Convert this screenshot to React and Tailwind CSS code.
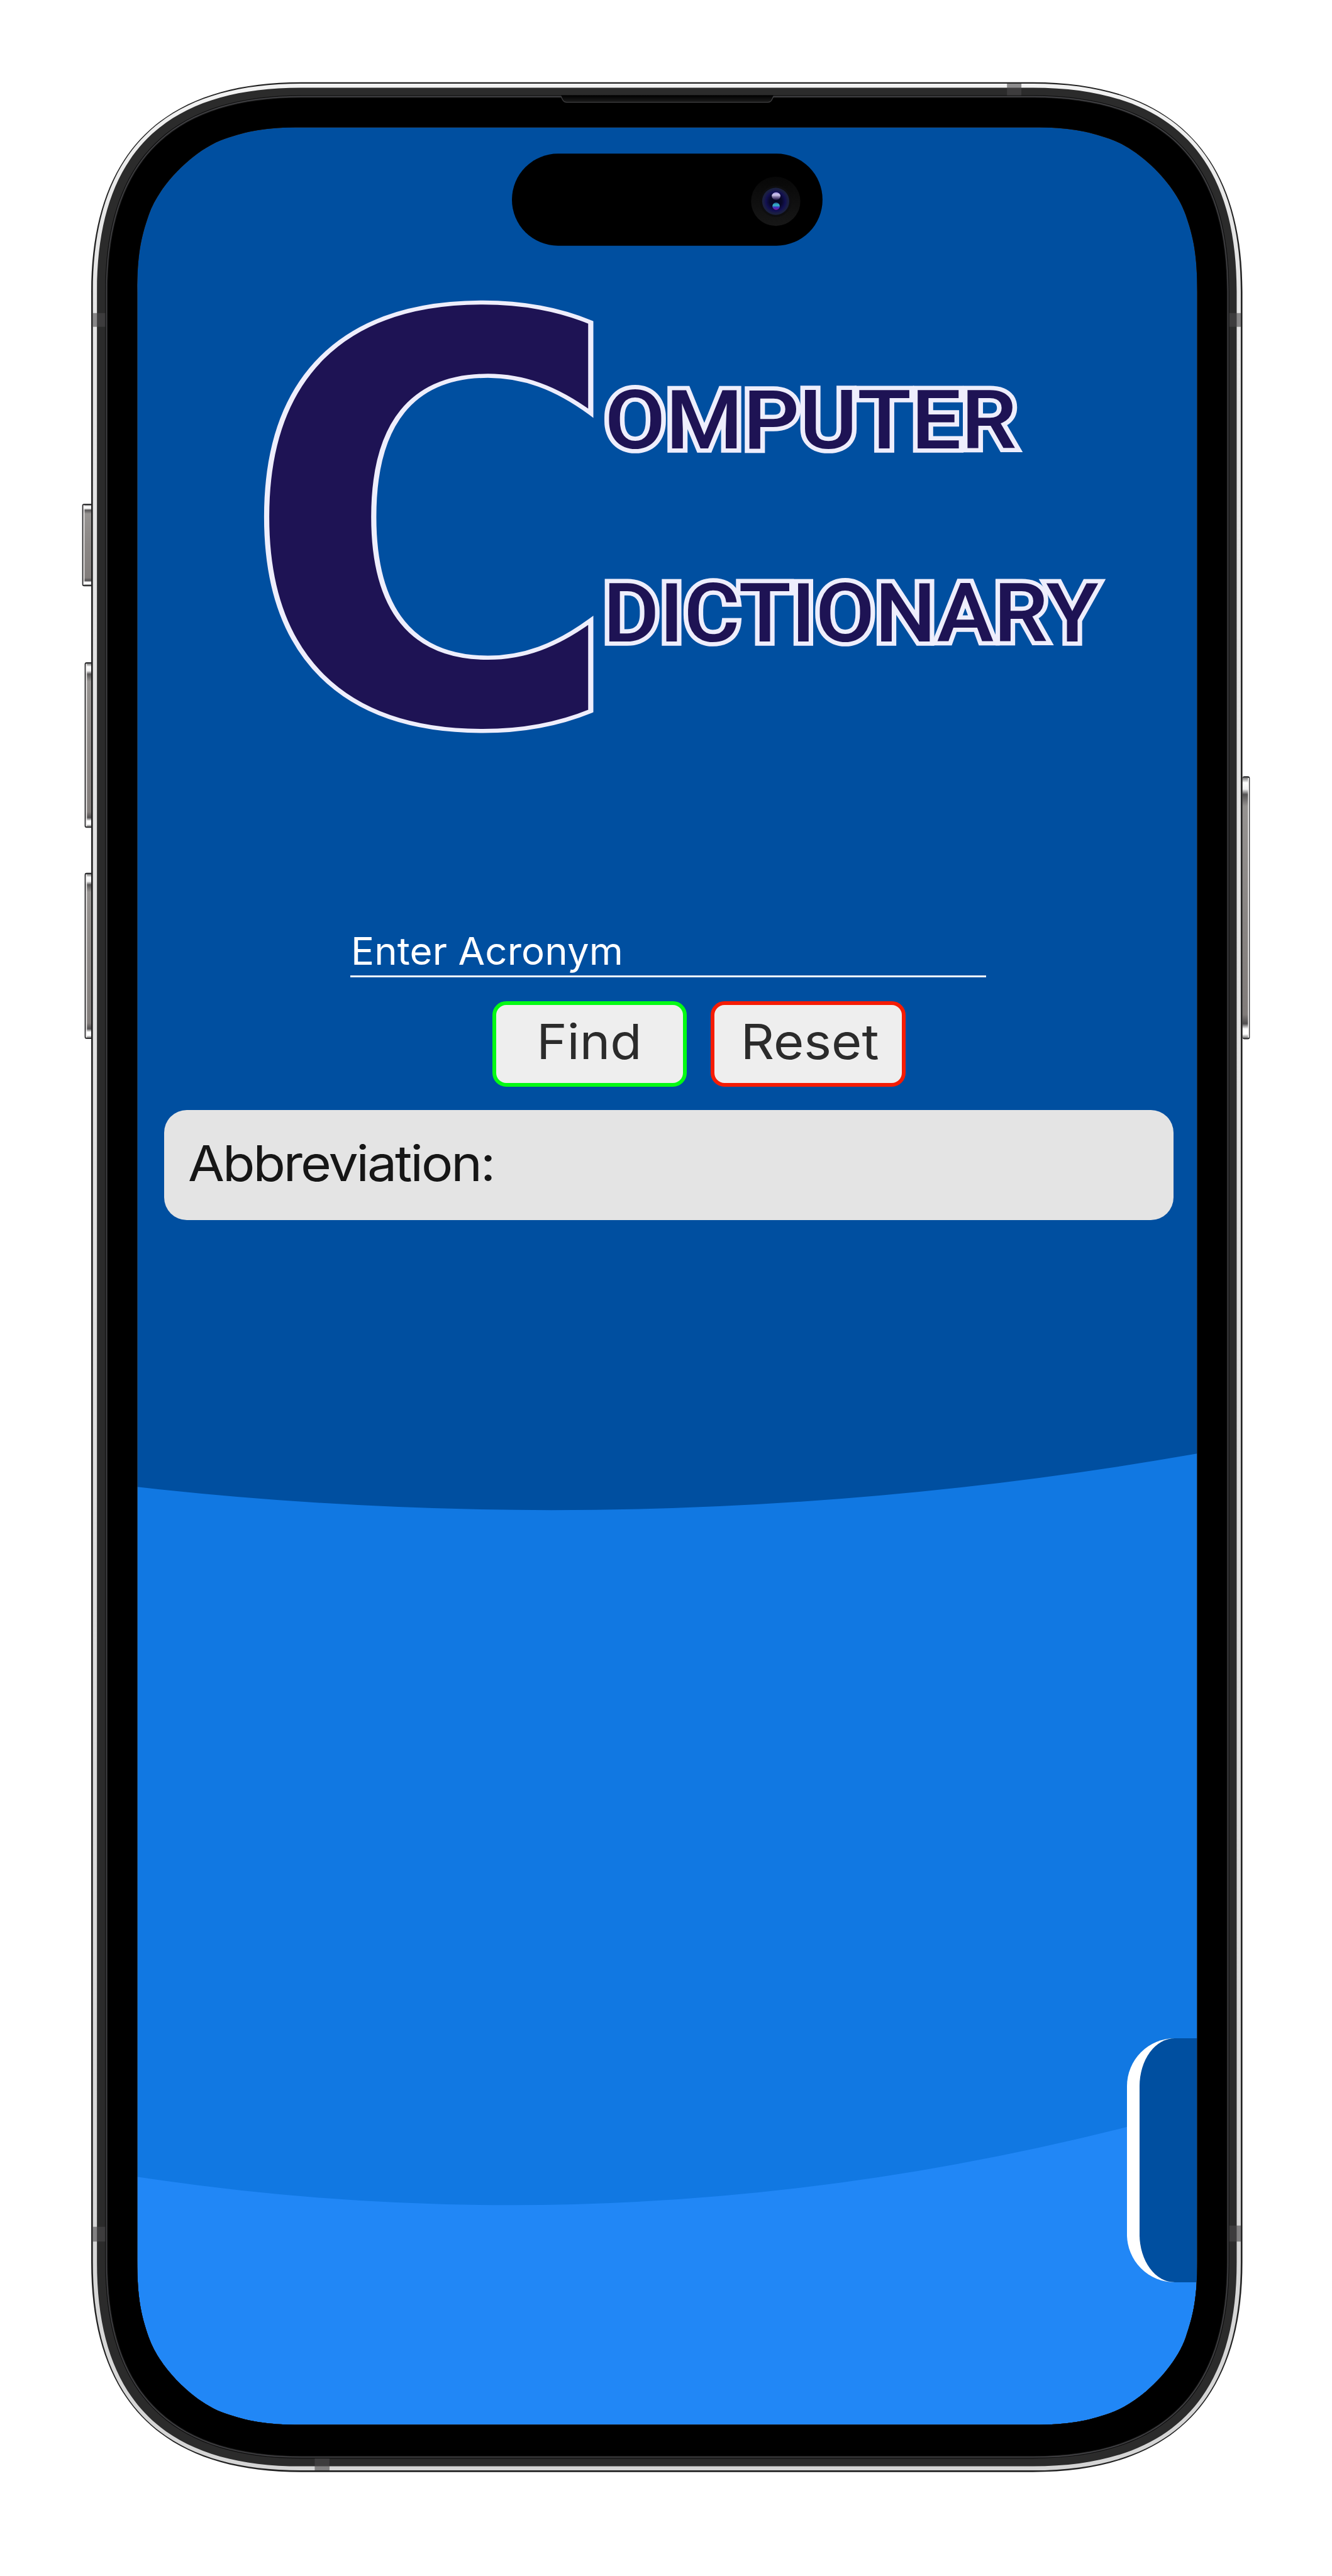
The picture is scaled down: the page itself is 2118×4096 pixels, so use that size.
const SCREEN_PATH = (() => {
  // One corner as [dx, dy] offsets measured from the corner point.
  const x0 = 334, y0 = 310, x1 = 2914, y1 = 5902;
  const pts = [[0, 400], [0, 310], [9, 268], [28, 213], [54, 138], [138, 54], [213, 28], [268, 9], [310, 0], [400, 0]];
  const corner = (fx, fy, reverse) => {
    const p = (reverse ? [...pts].reverse() : pts).map(([a, b]) => `${fx(a)} ${fy(b)}`);
    return `${p[0]} C ${p[1]} ${p[2]} ${p[3]} C ${p[4]} ${p[5]} ${p[6]} C ${p[7]} ${p[8]} ${p[9]}`;
  };
  const l = (a) => x0 + a, r = (a) => x1 - a, t = (b) => y0 + b, d = (b) => y1 - b;
  return `M ${corner(l, t, false)} L ${corner(r, t, true)} L ${corner(r, d, false)} L ${corner(l, d, true)} Z`;
})();

// Continuous-curvature rounded rectangle for the nested frame layers.
function squircle(x0, y0, x1, y1, L, c) {
  return [
    `M ${x0} ${y0 + L}`,
    `C ${x0} ${y0 + c} ${x0 + c} ${y0} ${x0 + L} ${y0}`,
    `L ${x1 - L} ${y0}`,
    `C ${x1 - c} ${y0} ${x1} ${y0 + c} ${x1} ${y0 + L}`,
    `L ${x1} ${y1 - L}`,
    `C ${x1} ${y1 - c} ${x1 - c} ${y1} ${x1 - L} ${y1}`,
    `L ${x0 + L} ${y1}`,
    `C ${x0 + c} ${y1} ${x0} ${y1 - c} ${x0} ${y1 - L}`,
    "Z",
  ].join(" ");
}

const FRAME_LAYERS = [
  { fill: "#222222", d: squircle(222, 200, 3024, 6017, 510, 174) },
  { fill: "url(#rim)", d: squircle(226, 203.5, 3020, 6013, 506, 169) },
  { fill: "#2b2b2b", d: squircle(236, 213.5, 3010, 6003, 496, 163) },
  { fill: "#101010", d: squircle(256, 232, 2992, 5984, 478, 158) },
  { fill: "#47474b", d: squircle(258, 234, 2990, 5982, 476, 157) },
  { fill: "#222222", d: squircle(260, 236, 2988, 5980, 474, 156) },
  { fill: "#000000", d: squircle(262, 238, 2986, 5978, 472, 155) },
];

function SideButton({ x, y, w, h, right }) {
  const shine = right ? x + w - 4.5 : x + 3;
  return (
    <g>
      <rect x={x} y={y} width={w + (right ? 0 : 6)} height={h} rx="5" fill="#2a2a2c" />
      <rect x={right ? x : x + 3} y={y + 3} width={w - 3} height={h - 6} fill="url(#key)" />
      <rect x={shine} y={y + 4} width="2.6" height={h - 8} fill="#f4f2f2" />
    </g>
  );
}

function PhoneFrame() {
  return (
    <svg
      className="pointer-events-none absolute inset-0 h-[4096px] w-[2118px]"
      viewBox="0 0 3242 6270"
      preserveAspectRatio="none"
      aria-hidden="true"
    >
      <defs>
        <linearGradient id="rim" x1="0" y1="0" x2="0" y2="1">
          <stop offset="0" stopColor="#f2f2f2" />
          <stop offset="0.06" stopColor="#e6e6e6" />
          <stop offset="0.5" stopColor="#e0e0e0" />
          <stop offset="1" stopColor="#d5d5d5" />
        </linearGradient>
        <linearGradient id="key" x1="0" y1="0" x2="0" y2="1">
          <stop offset="0" stopColor="#777" />
          <stop offset="0.02" stopColor="#fff" />
          <stop offset="0.045" stopColor="#f0f0f0" />
          <stop offset="0.065" stopColor="#555354" />
          <stop offset="0.11" stopColor="#969391" />
          <stop offset="0.5" stopColor="#8a8684" />
          <stop offset="0.91" stopColor="#817c7a" />
          <stop offset="0.945" stopColor="#504e4f" />
          <stop offset="0.965" stopColor="#fff" />
          <stop offset="0.985" stopColor="#fff" />
          <stop offset="1" stopColor="#777" />
        </linearGradient>
        <linearGradient id="slot" x1="0" y1="0" x2="0" y2="1">
          <stop offset="0" stopColor="#000" />
          <stop offset="1" stopColor="#1c1c1c" />
        </linearGradient>
        <linearGradient id="lensRing" x1="0" y1="0" x2="0" y2="1">
          <stop offset="0" stopColor="#070707" />
          <stop offset="1" stopColor="#171717" />
        </linearGradient>
        <radialGradient id="lens">
          <stop offset="0" stopColor="#05051c" />
          <stop offset="0.45" stopColor="#080828" />
          <stop offset="0.72" stopColor="#121052" />
          <stop offset="0.88" stopColor="#1b1e42" />
          <stop offset="1" stopColor="#1a2140" />
        </radialGradient>
        <linearGradient id="glintTop" x1="0" y1="0" x2="0" y2="1">
          <stop offset="0" stopColor="#a08fe0" />
          <stop offset="0.35" stopColor="#cfc6ea" />
          <stop offset="0.6" stopColor="#7d6f9f" />
          <stop offset="1" stopColor="#150c3c" />
        </linearGradient>
        <linearGradient id="glintBottom" x1="0" y1="0" x2="0" y2="1">
          <stop offset="0" stopColor="#21569a" />
          <stop offset="0.35" stopColor="#35bfc6" />
          <stop offset="0.65" stopColor="#3a34c0" />
          <stop offset="1" stopColor="#8a0f94" />
        </linearGradient>
      </defs>

      <SideButton x={200} y={1226} w={22} h={201} />
      <SideButton x={206} y={1612} w={16} h={403} />
      <SideButton x={206} y={2124.5} w={16} h={404.5} />
      <SideButton x={3024} y={1889.5} w={18} h={640} right />

      {FRAME_LAYERS.map((layer) => (
        <path key={layer.d} d={`${layer.d} ${SCREEN_PATH}`} fill={layer.fill} fillRule="evenodd" />
      ))}

      {/* Antenna bands */}
      <g fill="#4a474a" fillOpacity="0.6">
        <rect x="226" y="762" width="30" height="33.5" />
        <rect x="2992" y="762" width="28" height="33.5" />
        <rect x="226" y="5420" width="30" height="36" />
        <rect x="2992" y="5417" width="28" height="39" />
        <rect x="2451" y="203.5" width="35" height="28.5" />
        <rect x="766" y="5984" width="36" height="29" />
      </g>

      {/* Earpiece */}
      <path d="M1365 232 H1883 C1879 240 1878 249 1869 249 H1379 C1370 249 1369 240 1365 232 Z" fill="url(#slot)" />
      <path d="M1365 234 C1369 241 1370 249 1379 249 H1869 C1878 249 1879 241 1883 234" fill="none" stroke="#404042" strokeWidth="2" />

      {/* Island and camera */}
      <rect x="1246" y="374" width="756" height="224" rx="112" fill="#000" />
      <circle cx="1888" cy="490" r="60" fill="url(#lensRing)" />
      <circle cx="1888" cy="490" r="38" fill="#0e0e10" />
      <circle cx="1888" cy="490" r="33" fill="url(#lens)" />
      <ellipse cx="1889" cy="477.5" rx="10.5" ry="9.5" fill="url(#glintTop)" />
      <ellipse cx="1889" cy="502" rx="9" ry="9" fill="url(#glintBottom)" />
    </svg>
  );
}

function Logo() {
  return (
    <svg
      className="mt-[255px] h-[719px] w-[1688px] shrink-0 overflow-visible"
      viewBox="332.2 700 2583.8 1100"
      preserveAspectRatio="none"
      fill="#1e1354"
      stroke="#eeeefc"
      fontWeight="700"
    >
      <g transform="translate(520 1759.5) scale(1.262 1)">
        <text fontFamily='"DejaVu Sans Mono", monospace' fontSize="1378" strokeWidth="10">C</text>
      </g>
      <g fontFamily="Roboto, sans-serif" fontSize="200" fontWeight="500" strokeWidth="21" paintOrder="stroke">
        <text x="1472" y="1091" textLength="1003" lengthAdjust="spacingAndGlyphs">OMPUTER</text>
        <text x="1468" y="1562" textLength="1206" lengthAdjust="spacingAndGlyphs">DICTIONARY</text>
      </g>
    </svg>
  );
}

function Waves() {
  return (
    <svg
      className="absolute inset-0 h-full w-full"
      viewBox="332.2 309.2 2583.8 5594.7"
      preserveAspectRatio="none"
      aria-hidden="true"
    >
      <path d="M332 3619 H334 Q1624 3763.6 2914 3538 H2917 V5910 H332 Z" fill="#1178e2" />
      <path d="M332 5298 H334 Q1624 5494.6 2914 5131 H2917 V5910 H332 Z" fill="#2187f6" />
    </svg>
  );
}

export default function App() {
  return (
    <div className="relative h-[4096px] w-[2118px] overflow-hidden bg-white pt-[202px] pl-[217px] font-[Inter,sans-serif]">
      <main className="relative h-[3655px] w-[1688px] overflow-hidden rounded-[120px] bg-[#004fa0]">
        <Waves />
        <div className="relative flex flex-col">
          <Logo />
          <div className="mt-[296px] ml-[340px] h-[81.5px] w-[1011px] border-b-[3px] border-white pl-[1px] text-[60.6px] leading-[80px] whitespace-nowrap text-white">
            <span className="inline-block origin-left scale-x-[1.02] tracking-[0.1px]">Enter Acronym</span>
          </div>
          <div className="mt-[38.5px] ml-[565.5px] flex h-[136px] gap-[37.5px] text-[77.5px] text-[#2b2b2b]">
            <button className="flex w-[309.5px] items-center justify-center rounded-[22px] border-[6.5px] border-[#05fb14] bg-[#eeeeee] pb-[7px]">
              <span className="inline-block scale-x-[1.06]">Find</span>
            </button>
            <button className="flex w-[310px] items-center justify-center rounded-[22px] border-[6.5px] border-[#f51c05] bg-[#eeeeee] pb-[7px] pl-[6px]">
              <span className="inline-block scale-x-[1.07]">Reset</span>
            </button>
          </div>
          <div className="mt-[37px] ml-[43.5px] flex h-[175px] w-[1605px] items-center rounded-[36px] bg-[#e4e4e4] pb-[6px] pl-[38px] text-[78.5px] text-[#161616]">
            <span className="inline-block origin-left scale-x-[1.07] tracking-[-2.8px]">Abbreviation:</span>
          </div>
        </div>
        <div className="absolute top-[3039px] left-[1574.5px] h-[387.5px] w-[200px] rounded-l-[76px] border-l-[20px] border-white bg-[#004fa0]" />
      </main>
      <PhoneFrame />
    </div>
  );
}
